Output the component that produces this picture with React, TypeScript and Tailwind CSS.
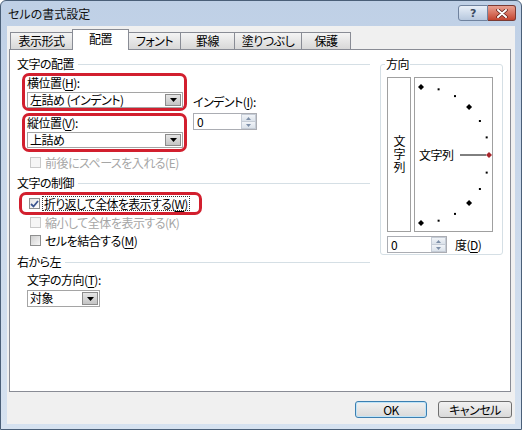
import React from 'react';

// mnemonic letter, underlined like the Windows dialog
const U = ({ children }: { children: React.ReactNode }) => (
  <span className="underline underline-offset-[2px]">{children}</span>
);

const DownArrow = () => (
  <svg width="7" height="4" viewBox="0 0 7 4">
    <path d="M0 0h7L3.5 4z" fill="#000" />
  </svg>
);

const Combo = ({ value, width, height }: { value: string; width: string; height: string }) => (
  <div className={`flex items-stretch border border-[#a5a5a5] bg-white ${width} ${height}`}>
    <span className="flex-1 whitespace-nowrap pl-[2px] leading-[14px]">{value}</span>
    <span className="m-[1px] flex w-[16px] items-center justify-center border border-[#8c8c8c] bg-gradient-to-b from-[#e6e6e6] to-[#c4c4c4]">
      <DownArrow />
    </span>
  </div>
);

const Spin = ({ width }: { width: string }) => (
  <div className={`flex h-[17px] border border-[#abadb3] bg-white ${width}`}>
    <span className="flex-1 pl-[3px] leading-[15px]">0</span>
    <div className="flex w-[15px] flex-col">
      <span className="flex flex-1 items-center justify-center border border-[#c5ccd6] bg-gradient-to-b from-[#f1f4f8] to-[#dbe2ea]">
        <svg width="5" height="3" viewBox="0 0 5 3">
          <path d="M0 3h5L2.5 0z" fill="#7d8fa8" />
        </svg>
      </span>
      <span className="flex flex-1 items-center justify-center border border-t-0 border-[#c5ccd6] bg-gradient-to-b from-[#f1f4f8] to-[#dbe2ea]">
        <svg width="5" height="3" viewBox="0 0 5 3">
          <path d="M0 0h5L2.5 3z" fill="#7d8fa8" />
        </svg>
      </span>
    </div>
  </div>
);

const Check = ({ checked, disabled }: { checked?: boolean; disabled?: boolean }) => (
  <span
    className={`flex h-[11px] w-[11px] shrink-0 items-center justify-center border ${
      disabled
        ? 'border-[#c9c9c9] bg-[#f5f5f5]'
        : checked
        ? 'border-[#8e8f8f] bg-gradient-to-br from-[#e4e4e4] to-[#ffffff]'
        : 'border-[#8e8f8f] bg-gradient-to-br from-[#cfcfcf] to-[#f7f7f7]'
    }`}
  >
    {checked && (
      <svg width="9" height="8" viewBox="0 0 9 8">
        <path d="M1 4l2.5 2.5L8 1" fill="none" stroke="#3c5690" strokeWidth="1.8" />
      </svg>
    )}
  </span>
);

const GroupHeader = ({ label, className }: { label: string; className: string }) => (
  <div className={`flex h-[14px] items-center ${className}`}>
    <span className="whitespace-nowrap leading-[14px]">{label}</span>
    <span className="ml-[4px] h-px flex-1 bg-[#d5dfe5]" />
  </div>
);

const tabs = [
  { label: '表示形式', w: 'w-[63px]' },
  { label: '配置', w: 'w-[57px]', active: true },
  { label: 'フォント', w: 'w-[53px]' },
  { label: '罫線', w: 'w-[55px]' },
  { label: '塗りつぶし', w: 'w-[68px]' },
  { label: '保護', w: 'w-[50px]' },
];

const Dial = () => {
  const marks = [];
  for (let a = 90; a >= -90; a -= 15) {
    const r = (a * Math.PI) / 180;
    const x = 6 + 68 * Math.cos(r);
    const y = 77 - 68 * Math.sin(r);
    if (a === 0) {
      marks.push(<path key={a} d={`M${x} ${y - 3}l3 3-3 3-3-3z`} fill="#a8262c" />);
    } else if (a % 45 === 0) {
      marks.push(<path key={a} d={`M${x} ${y - 3}l3 3-3 3-3-3z`} fill="#000" />);
    } else {
      marks.push(<rect key={a} x={x - 1} y={y - 1} width="2" height="2" fill="#000" />);
    }
  }
  return (
    <svg width="77" height="153" viewBox="0 0 77 153" className="absolute left-0 top-0">
      <line x1="45" y1="77" x2="71" y2="77" stroke="#000" strokeWidth="1" />
      {marks}
    </svg>
  );
};

export default function App() {
  return (
    <div className="h-[430px] w-[522px] bg-white text-[12px] leading-[14px] tracking-[-0.5px] text-black [font-feature-settings:'palt'] font-['Noto_Sans_CJK_JP','Liberation_Sans',sans-serif]">
      <div className="flex h-[430px] w-[522px] flex-col rounded-t-[6px] border border-[#4a5f78] bg-gradient-to-b from-[#bfd0e6] to-[#d6e2f0]">
        {/* title bar */}
        <div className="flex h-[25px] shrink-0 items-start justify-between">
          <span className="mt-[6px] ml-[7px] text-[12px] leading-[14px] tracking-normal text-[#111]">セルの書式設定</span>
          <div className="mt-[4px] mr-[5px] flex">
            <span className="flex h-[16px] w-[30px] items-center justify-center rounded-l-[3px] border border-[#6f829e] bg-gradient-to-b from-[#e8eff8] to-[#b7c8de] text-[11px] font-bold leading-none text-[#3b4a60] font-['DejaVu_Sans',sans-serif]">
              ?
            </span>
            <span className="flex h-[16px] w-[28px] items-center justify-center rounded-r-[3px] border border-l-0 border-[#7a3a33] bg-gradient-to-b from-[#e8a091] to-[#c3432f]">
              <svg width="12" height="9" viewBox="0 0 12 9">
                <path d="M2 1l8 7M10 1L2 8" stroke="#5a1a14" strokeWidth="3.4" strokeLinecap="round" />
                <path d="M2 1l8 7M10 1L2 8" stroke="#fff" strokeWidth="2" strokeLinecap="round" />
              </svg>
            </span>
          </div>
        </div>

        {/* client area */}
        <div className="mx-[6px] mb-[5px] flex flex-1 flex-col bg-[#f0f0f0]">
          {/* tabs */}
          <div className="ml-[4px] flex h-[23px] items-end pt-[3px]">
            {tabs.map((t) =>
              t.active ? (
                <span
                  key={t.label}
                  className={`relative z-10 -mb-px -ml-px flex h-[21px] items-center justify-center border border-b-0 border-[#898c95] bg-white pb-[2px] ${t.w}`}
                >
                  {t.label}
                </span>
              ) : (
                <span
                  key={t.label}
                  className={`-ml-px flex h-[17px] items-center justify-center border border-b-0 border-[#898c95] bg-gradient-to-b from-[#f4f4f4] to-[#d8d8d8] ${t.w}`}
                >
                  {t.label}
                </span>
              )
            )}
          </div>

          {/* panel */}
          <div className="mr-[4px] ml-[2px] flex h-[343px] border border-[#898c95] bg-white">
            {/* left column */}
            <div className="flex w-[370px] flex-col pr-[10px] pl-[7px]">
              <GroupHeader label="文字の配置" className="mt-[7px]" />
              <div className="mt-[2px] flex">
                <div className="ml-[5px] flex w-[165px] flex-col">
                  <div className="h-[38px] rounded-[7px] border-[3px] border-[#d21f2e] pl-[2px]">
                    <div className="h-[13px] whitespace-nowrap leading-[13px]">
                      横位置(<U>H</U>):
                    </div>
                    <div className="mt-[3px]">
                      <Combo value="左詰め (インデント)" width="w-[156px]" height="h-[16px]" />
                    </div>
                  </div>
                  <div className="mt-[2px] h-[39px] rounded-[7px] border-[3px] border-[#d21f2e] pl-[2px]">
                    <div className="h-[13px] whitespace-nowrap leading-[13px]">
                      縦位置(<U>V</U>):
                    </div>
                    <div className="mt-[3px]">
                      <Combo value="上詰め" width="w-[156px]" height="h-[16px]" />
                    </div>
                  </div>
                </div>
                <div className="ml-[6px] flex flex-col">
                  <div className="mt-[22px] h-[14px] whitespace-nowrap">
                    インデント(<U>I</U>):
                  </div>
                  <div className="mt-[4px]">
                    <Spin width="w-[64px]" />
                  </div>
                </div>
              </div>
              <div className="mt-[4px] ml-[13px] flex h-[13px] items-center gap-[4px] whitespace-nowrap text-[#a6a6a6]">
                <Check disabled />
                <span>前後にスペースを入れる(E)</span>
              </div>

              <GroupHeader label="文字の制御" className="mt-[7px]" />
              <div className="mt-[2px] ml-[2px] flex h-[23px] w-[183px] items-center rounded-[7px] border-[3px] border-[#d21f2e] pl-[7px]">
                <Check checked />
                <span className="ml-[2px] whitespace-nowrap border border-dotted border-[#333] px-[1px] leading-[13px] tracking-[-0.7px]">
                  折り返して全体を表示する(<U>W</U>)
                </span>
              </div>
              <div className="mt-[1px] ml-[13px] flex h-[13px] items-center gap-[4px] whitespace-nowrap text-[#a6a6a6]">
                <Check disabled />
                <span>縮小して全体を表示する(K)</span>
              </div>
              <div className="mt-[5px] ml-[13px] flex h-[13px] items-center gap-[4px] whitespace-nowrap">
                <Check />
                <span>
                  セルを結合する(<U>M</U>)
                </span>
              </div>

              <GroupHeader label="右から左" className="mt-[8px]" />
              <div className="mt-[4px] ml-[10px] h-[14px] whitespace-nowrap">
                文字の方向(<U>T</U>):
              </div>
              <div className="mt-[3px] ml-[10px]">
                <Combo value="対象" width="w-[73px]" height="h-[17px]" />
              </div>
            </div>

            {/* right column: orientation */}
            <div className="pt-[14px]">
              <div className="flex h-[191px] w-[123px] flex-col rounded-[3px] border border-[#d5dfe5]">
                <span className="-mt-[8px] ml-[4px] h-[14px] w-fit bg-white px-[1px]">方向</span>
                <div className="mt-[6px] ml-[6px] flex h-[155px] gap-[3px]">
                  <div className="flex w-[24px] items-center justify-center border border-[#a0a0a0]">
                    <span className="leading-[14px] tracking-[1px] [text-orientation:upright] [writing-mode:vertical-rl]">
                      文字列
                    </span>
                  </div>
                  <div className="relative flex w-[79px] items-center border border-[#a0a0a0]">
                    <Dial />
                    <span className="relative ml-[4px] whitespace-nowrap">文字列</span>
                  </div>
                </div>
                <div className="mt-[4px] ml-[6px] flex items-center">
                  <Spin width="w-[60px]" />
                  <span className="ml-[8px] whitespace-nowrap">
                    度(<U>D</U>)
                  </span>
                </div>
              </div>
            </div>
          </div>

          {/* buttons */}
          <div className="mt-[9px] mr-[3px] flex justify-end gap-[11px]">
            <button className="h-[17px] w-[72px] rounded-[3px] border border-[#3c7fb1] bg-gradient-to-b from-[#f2f2f2] to-[#d9d9d9] text-[12px] leading-[13px] shadow-[inset_0_0_0_1px_#bfe4f8]">
              OK
            </button>
            <button className="h-[17px] w-[74px] rounded-[3px] border border-[#707070] bg-gradient-to-b from-[#f2f2f2] to-[#d9d9d9] text-[12px] leading-[13px]">
              キャンセル
            </button>
          </div>
        </div>
      </div>
    </div>
  );
}
